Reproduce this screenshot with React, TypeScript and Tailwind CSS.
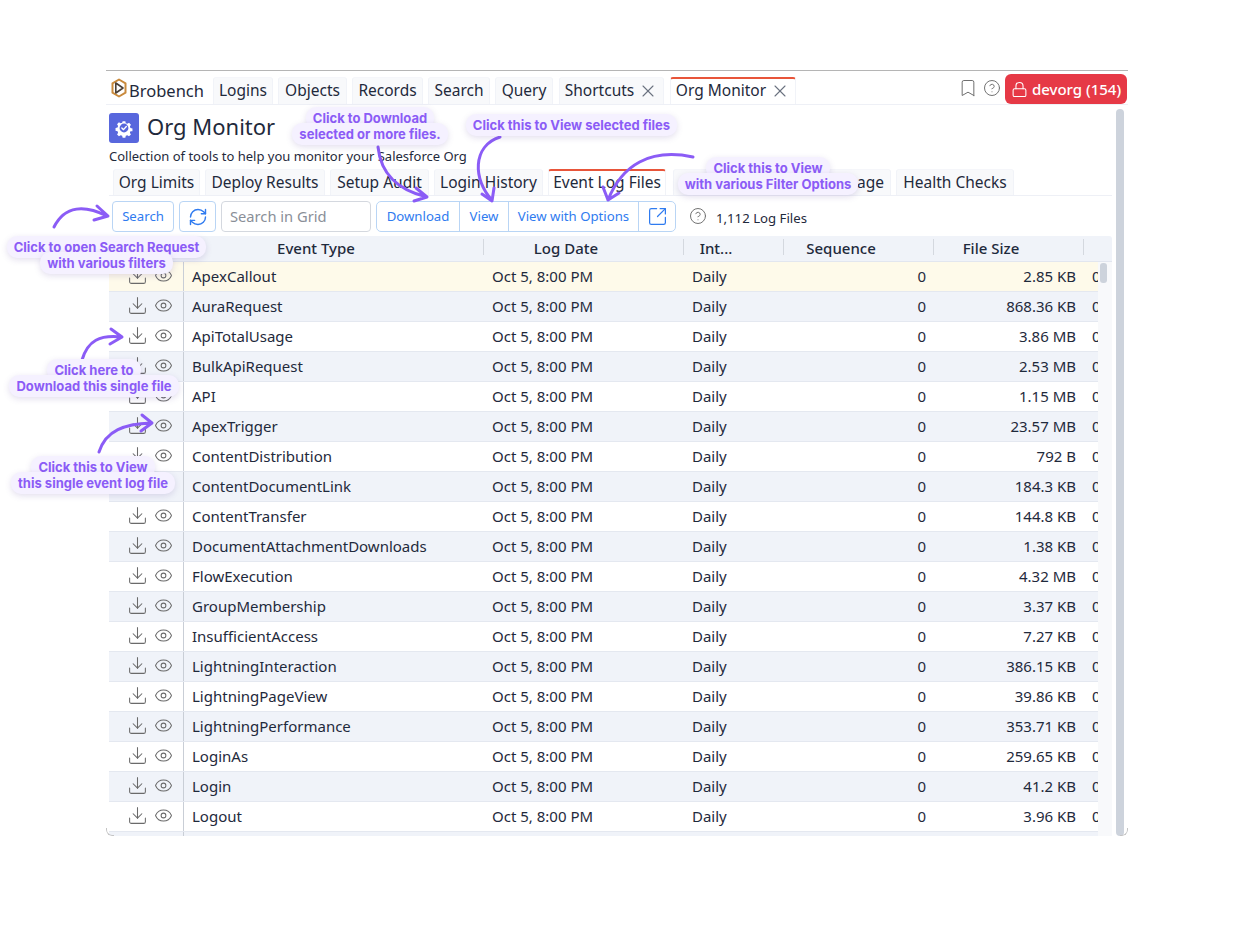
import { Bookmark, CircleHelp, Download, Eye, Lock, RefreshCw, SquareArrowOutUpRight, X } from "lucide-react";

const rows = [
  ["ApexCallout", "2.85 KB"],
  ["AuraRequest", "868.36 KB"],
  ["ApiTotalUsage", "3.86 MB"],
  ["BulkApiRequest", "2.53 MB"],
  ["API", "1.15 MB"],
  ["ApexTrigger", "23.57 MB"],
  ["ContentDistribution", "792 B"],
  ["ContentDocumentLink", "184.3 KB"],
  ["ContentTransfer", "144.8 KB"],
  ["DocumentAttachmentDownloads", "1.38 KB"],
  ["FlowExecution", "4.32 MB"],
  ["GroupMembership", "3.37 KB"],
  ["InsufficientAccess", "7.27 KB"],
  ["LightningInteraction", "386.15 KB"],
  ["LightningPageView", "39.86 KB"],
  ["LightningPerformance", "353.71 KB"],
  ["LoginAs", "259.65 KB"],
  ["Login", "41.2 KB"],
  ["Logout", "3.96 KB"],
  ["", ""],
];

const topTabs = [
  { label: "Logins", w: "w-[60px]" },
  { label: "Objects", w: "w-[69px]" },
  { label: "Records", w: "w-[71px]" },
  { label: "Search", w: "w-[62px]" },
  { label: "Query", w: "w-[58px]" },
];

const subTabs = [
  { label: "Org Limits", w: "w-[87px]" },
  { label: "Deploy Results", w: "w-[120px]" },
  { label: "Setup Audit", w: "w-[99px]" },
  { label: "Login History", w: "w-[109px]" },
];

function Logo() {
  return (
    <svg width="16" height="20" viewBox="0 0 16 20" fill="none">
      <path d="M8 1.500 14.500 5.300v9.400L8 18.500l-6.500-3.800V5.300z" stroke="#c98a3c" strokeWidth="2" strokeLinejoin="round" />
      <path d="M4.800 5v10L12 10z" stroke="#4a4038" strokeWidth="1.600" strokeLinejoin="round" />
    </svg>
  );
}

function GearCheck() {
  return (
    <svg width="20" height="20" viewBox="0 0 24 24">
      <path
        d="M10 1.800h4l.7 3 2.200 1 2.700-1.500 2.800 2.900-1.600 2.600.9 2.200 3 .8v4h-3l-.9 2.200 1.600 2.600-2.900 2.800-2.600-1.600-2.200.9-.7 3h-4l-.8-3-2.200-.9-2.600 1.600-2.800-2.800 1.600-2.600-.9-2.200-3-.8v-4l3-.8.9-2.200-1.600-2.600 2.800-2.900 2.600 1.500 2.200-1z"
        fill="#fff"
        transform="translate(2.400 2.400) scale(.8)"
      />
      <circle cx="12" cy="12" r="5.300" fill="#5867dd" />
      <path d="m9.400 12 2 2 3.400-3.800" stroke="#fff" strokeWidth="1.600" fill="none" strokeLinecap="round" strokeLinejoin="round" />
    </svg>
  );
}

function Note({ lines, className }: { lines: string[]; className: string }) {
  return (
    <div className={`absolute z-20 flex flex-col items-center font-['Inter',sans-serif] text-[13px] leading-[16px] font-bold text-[#8b5cf6] ${className}`}>
      {lines.map((l) => (
        <span key={l} className="-my-[3px] rounded-[10px] bg-[#f5f1ff] px-[7px] py-[3px] whitespace-nowrap shadow-[0_2px_6px_rgba(100,80,160,0.18)]">
          {l}
        </span>
      ))}
    </div>
  );
}

// hand drawn arrows that sit over the screenshot
function Arrows() {
  const paths = [
    "M378 147C381 175 398 190 427 197M416 188l11 9-13 4",
    "M500 137C472 146 473 180 492 200M482 194l10 7 2-13",
    "M693 157C650 148 622 165 608 200M603 187l5 13 11-7",
    "M54 227C65 205 85 205 107 216M97 206l11 10-14 4",
    "M82 360C88 340 100 335 121 337M111 329l11 8-12 7",
    "M99 452C106 430 125 424 151 423M142 415l10 8-11 8",
  ];
  return (
    <svg className="absolute top-0 left-0 z-10" width="1257" height="940" fill="none">
      {paths.map((d) => (
        <path key={d} d={d} stroke="#8b5cf6" strokeWidth="3" strokeLinecap="round" strokeLinejoin="round" />
      ))}
    </svg>
  );
}

function Tab({ label, w, active, close }: { label: string; w: string; active?: boolean; close?: boolean }) {
  return (
    <div
      className={`flex h-full items-center justify-center gap-[4px] rounded-t-[3px] border-x border-x-[#f1f3f8] ${w} ${
        active ? "border-t-2 border-t-[#e8553a] bg-white pb-[1px]" : "border-t border-t-[#f5f6fa] bg-[#f8f9fb]"
      }`}
    >
      <span className="whitespace-nowrap">{label}</span>
      {close && <X size={20} strokeWidth={1.300} className="text-[#6b7280]" />}
    </div>
  );
}

export default function App() {
  return (
    <div className="relative h-[940px] w-full overflow-hidden bg-white pt-[70px] pl-[106px] font-['Noto_Sans',sans-serif] text-[#1f2a3c]">
      <Arrows />
      <Note lines={["Click to Download", "selected or more files."]} className="top-[110px] left-[292px] w-[156px]" />
      <Note lines={["Click this to View selected files"]} className="top-[117px] left-[464px] w-[215px]" />
      <Note lines={["Click this to View", "with various Filter Options"]} className="top-[160px] left-[677px] w-[182px]" />
      <Note lines={["Click to open Search Request", "with various filters"]} className="top-[239px] left-[5px] w-[203px]" />
      <Note lines={["Click here to", "Download this single file"]} className="top-[362px] left-[8px] w-[172px]" />
      <Note lines={["Click this to View", "this single event log file"]} className="top-[459px] left-[10px] w-[166px]" />

      <div className="relative h-[766px] w-[1022px] overflow-hidden rounded-b-[6px] border-t border-t-[#b5b5b5]">
        {/* top bar */}
        <div className="flex h-[34px] items-end border-b border-b-[#eef0f6] pl-[5px] text-[15.500px]">
          <div className="flex h-full w-[102px] items-center gap-[2px] pt-[1px]">
            <Logo />
            <span className="pt-[6px] text-[16.500px]">Brobench</span>
          </div>
          <div className="flex h-[27px] gap-[5px]">
            {topTabs.map((t) => (
              <Tab key={t.label} label={t.label} w={t.w} />
            ))}
            <Tab label="Shortcuts" w="w-[105px] ml-[1px]" close />
            <Tab label="Org Monitor" w="w-[126px] ml-[1px]" active close />
          </div>
          <div className="ml-auto flex h-full items-center">
            <Bookmark size={20} strokeWidth={1.200} className="text-[#6f6f6f]" />
            <CircleHelp size={18} strokeWidth={1.300} className="ml-[5px] text-[#6f6f6f]" />
            <div className="mt-[3px] mr-[1px] ml-[4px] flex h-[30px] w-[122px] items-center justify-center gap-[4px] rounded-[6px] bg-[#e63946] text-[15px] font-medium text-white">
              <Lock size={17} strokeWidth={1.500} />
              devorg (154)
            </div>
          </div>
        </div>

        <div className="flex h-[731px]">
          <div className="w-[1006px] pl-[3px]">
            {/* page title */}
            <div className="flex h-[38px] items-end">
              <div className="flex h-[30px] w-[30px] items-center justify-center rounded-[3px] bg-[#5867dd]">
                <GearCheck />
              </div>
              <div className="ml-[8px] pb-[2px] text-[22px] leading-[30px]">Org Monitor</div>
            </div>
            <div className="h-[26px] pt-[4px] text-[13px] leading-[18px]">Collection of tools to help you monitor your Salesforce Org</div>

            {/* sub tabs */}
            <div className="flex h-[27px] gap-[5px] border-b border-b-[#eef0f6] pl-[4px] text-[15.500px]">
              {subTabs.map((t) => (
                <Tab key={t.label} label={t.label} w={t.w} />
              ))}
              <Tab label="Event Log Files" w="w-[118px]" active />
              <Tab label="Org Usage" w="w-[218px] justify-end pr-[6px] ml-[2px]" />
              <Tab label="Health Checks" w="w-[118px]" />
            </div>

            {/* toolbar */}
            <div className="flex h-[40px] items-start pt-[5px] pl-[3px] text-[13.200px]">
              <div className="flex h-[31px] w-[62px] items-center justify-center rounded-[4px] border border-[#b9d5f5] text-[#2f7bf0]">Search</div>
              <div className="ml-[5px] flex h-[31px] w-[37px] items-center justify-center rounded-[4px] border border-[#b9d5f5] text-[#2f7bf0]">
                <RefreshCw size={20} strokeWidth={1.700} />
              </div>
              <div className="ml-[5px] flex h-[31px] w-[150px] items-center rounded-[4px] border border-[#d4d8df] pl-[8px] text-[14.700px] text-[#8a8f98]">Search in Grid</div>
              <div className="ml-[5px] flex h-[31px] w-[300px] items-stretch rounded-[5px] border border-[#b9d5f5] text-[#2f7bf0]">
                <div className="flex w-[83px] items-center justify-center border-r border-r-[#b9d5f5]">Download</div>
                <div className="flex w-[49px] items-center justify-center border-r border-r-[#b9d5f5]">View</div>
                <div className="flex w-[130px] items-center justify-center border-r border-r-[#b9d5f5]">View with Options</div>
                <div className="flex flex-1 items-center justify-center">
                  <SquareArrowOutUpRight size={21} strokeWidth={1.400} />
                </div>
              </div>
              <CircleHelp size={18} strokeWidth={1.300} className="mt-[6px] ml-[13px] text-[#6f6f6f]" />
              <span className="mt-[8px] ml-[9px] leading-[18px] text-[#1f2a3c]">1,112 Log Files</span>
            </div>

            {/* grid */}
            <div className="w-[1003px]">
              <div className="flex h-[26px] items-center rounded-t-[3px] border-b border-b-[#e2e6ef] bg-[#f0f3f9] text-[15px] font-medium">
                <div className="w-[75px]" />
                <HeaderCell label="Event Type" w="w-[300px]" />
                <HeaderCell label="Log Date" w="w-[200px]" />
                <HeaderCell label="Int..." w="w-[100px]" />
                <HeaderCell label="Sequence" w="w-[150px]" />
                <HeaderCell label="File Size" w="w-[150px]" />
              </div>
              <div className="flex">
                <div className="w-[989px] overflow-hidden text-[15px]">
                  {rows.map(([name, size], i) => (
                    <div
                      key={i}
                      className={`flex h-[30px] w-[1100px] items-center border-b border-b-[#e4e8f0] ${
                        i === 0 ? "bg-[#fefaea]" : i % 2 === 1 ? "bg-[#f0f3f9]" : "bg-white"
                      }`}
                    >
                      <div className="flex h-full w-[75px] items-center border-r border-r-[#c9ced6] pb-[3px] pl-[18px] text-[#6a6a6a]">
                        <Download size={21} strokeWidth={1.200} />
                        <Eye size={19} strokeWidth={1.300} className="ml-[6px]" />
                      </div>
                      <div className="w-[300px] pl-[8px]">{name}</div>
                      <div className="w-[200px] pl-[8px]">{name && "Oct 5, 8:00 PM"}</div>
                      <div className="w-[100px] pl-[8px]">{name && "Daily"}</div>
                      <div className="w-[150px] pr-[8px] text-right">{name && "0"}</div>
                      <div className="w-[150px] pr-[8px] text-right">{size}</div>
                      <div className="pl-[8px]">{name && "0"}</div>
                    </div>
                  ))}
                </div>
                <div className="w-[14px] bg-[#f8f9fb] pt-[1px] pl-[2px]">
                  <div className="h-[20px] w-[7px] rounded-[3px] bg-[#cdd3dc]" />
                </div>
              </div>
            </div>
          </div>
          <div className="pt-[4px] pl-[4px]">
            <div className="h-[727px] w-[8px] rounded-[4px] bg-[#cdd3dc]" />
          </div>
        </div>

        {/* rounded frame corners */}
        <div className="absolute bottom-0 left-0 h-[8px] w-[8px] rounded-bl-[6px] border-b border-l border-[#c4c4c4]" />
        <div className="absolute right-0 bottom-0 h-[8px] w-[8px] rounded-br-[6px] border-r border-b border-[#c4c4c4]" />
      </div>
    </div>
  );
}

function HeaderCell({ label, w }: { label: string; w: string }) {
  return (
    <div className={`relative pr-[36px] text-center ${w}`}>
      {label}
      <div className="absolute top-[2px] right-0 h-[16px] w-px bg-[#d4d8df]" />
    </div>
  );
}
